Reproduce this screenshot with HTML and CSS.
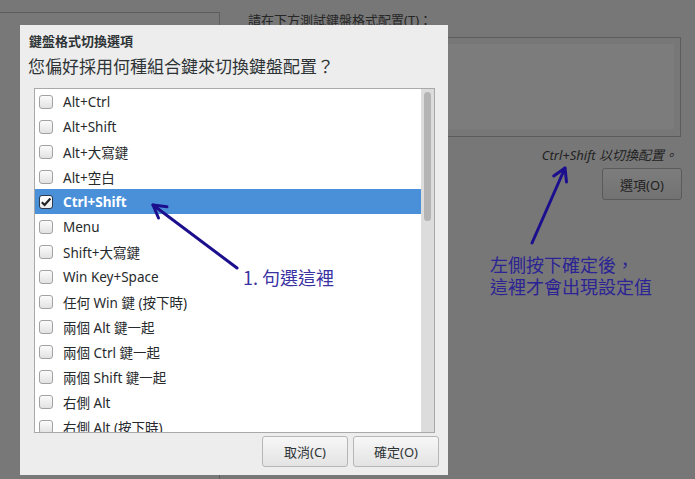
FILE: index.html
```html
<!DOCTYPE html>
<html lang="zh-Hant">
<head>
  <meta charset="UTF-8" />
  <title>鍵盤格式切換選項</title>
  <link rel="stylesheet" href="styles.css">
</head>
<body>
  <div class="window">
    <div class="sidebar"></div>
    <div class="pane">
      <div class="pane-label">請在下方測試鍵盤格式配置(T)：</div>
      <div class="test-box"><div class="test-inner"></div></div>
      <div class="hint">Ctrl+Shift 以切換配置。</div>
      <div class="pane-actions"><button class="btn btn-dim">選項(O)</button></div>
    </div>
  </div>

  <div class="dialog">
    <h1 class="dlg-title">鍵盤格式切換選項</h1>
    <h2 class="dlg-question">您偏好採用何種組合鍵來切換鍵盤配置？</h2>
    <div class="list">
      <div class="rows">
        <div class="item"><span class="box"></span>Alt+Ctrl</div>
        <div class="item"><span class="box"></span>Alt+Shift</div>
        <div class="item"><span class="box"></span>Alt+大寫鍵</div>
        <div class="item"><span class="box"></span>Alt+空白</div>
        <div class="item selected">
          <span class="box checked">
            <svg width="12" height="12" viewBox="0 0 12 12"><path d="M1.8 6.2 L4.6 9 L10.4 2.4" fill="none" stroke="#222" stroke-width="2.2"/></svg>
          </span>Ctrl+Shift
        </div>
        <div class="item"><span class="box"></span>Menu</div>
        <div class="item"><span class="box"></span>Shift+大寫鍵</div>
        <div class="item"><span class="box"></span>Win Key+Space</div>
        <div class="item"><span class="box"></span>任何 Win 鍵 (按下時)</div>
        <div class="item"><span class="box"></span>兩個 Alt 鍵一起</div>
        <div class="item"><span class="box"></span>兩個 Ctrl 鍵一起</div>
        <div class="item"><span class="box"></span>兩個 Shift 鍵一起</div>
        <div class="item"><span class="box"></span>右側 Alt</div>
        <div class="item"><span class="box"></span>右側 Alt (按下時)</div>
      </div>
      <div class="track"><div class="thumb"></div></div>
    </div>
    <div class="dlg-actions">
      <button class="btn">取消(C)</button>
      <button class="btn">確定(O)</button>
    </div>
  </div>

  <!-- hand-drawn pointers -->
  <svg class="marks" width="695" height="479" viewBox="0 0 695 479">
    <g fill="none" stroke="#1c0f8e" stroke-width="3" stroke-linecap="round" stroke-linejoin="round">
      <path d="M237 268 L153 205"/>
      <path d="M158.5 218 L153 205 L167 206.7"/>
      <path d="M532 243 L565 168"/>
      <path d="M553.7 176 L565 168 L566.5 182"/>
    </g>
  </svg>
  <div class="note note-left">1. 句選這裡</div>
  <div class="note note-right">
    <div>左側按下確定後，</div>
    <div>這裡才會出現設定值</div>
  </div>
</body>
</html>
```

FILE: styles.css
```css
body {
  margin: 0;
  width: 695px;
  height: 479px;
  overflow: hidden;
  position: relative;
  background: #777777;
  font-family: 'Noto Sans', 'Noto Sans CJK TC', sans-serif;
  color: #2e3436;
}
.window {
  display: flex;
  height: 479px;
}
.sidebar {
  width: 219px;
  margin-top: 12px;
  border-top: 1px solid #5e5e5e;
  border-right: 1px solid #5e5e5e;
  background: #787878;
}
.pane {
  flex: 1;
  padding: 12px 14px 0 28px;
}
.pane-label {
  font-size: 13px;
  line-height: 16px;
  color: #262626;
  margin-bottom: 9px;
}
.test-box {
  border: 1px solid #5c5c5c;
  padding: 6px 6px 7px 6px;
}
.test-inner {
  height: 85px;
  background: #7c7c7c;
}
.hint {
  margin-top: 9px;
  margin-right: 4px;
  text-align: right;
  font-size: 13px;
  line-height: 18px;
  font-style: italic;
  color: #222;
}
.pane-actions {
  display: flex;
  justify-content: flex-end;
  margin-top: 4px;
  margin-right: -1px;
}
.btn {
  width: 86px;
  height: 31px;
  border: 1px solid #b6b6b6;
  border-radius: 3px;
  background: linear-gradient(#f7f7f7, #e3e3e3);
  font-family: 'Noto Sans', 'Noto Sans CJK TC', sans-serif;
  font-size: 13px;
  color: #2e3436;
  padding: 0;
}
.btn-dim {
  width: 80px;
  height: 32px;
  border-color: #5a5a5a;
  background: linear-gradient(#7d7d7d, #727272);
  color: #1f1f1f;
}

/* the dialog on top */
.dialog {
  position: absolute;
  left: 20px;
  top: 25px;
  width: 428px;
  height: 450px;
  box-sizing: border-box;
  padding: 8px 9px 0 9px;
  background: #ededed;
}
.dlg-title {
  margin: 0;
  font-size: 13px;
  line-height: 17px;
  font-weight: bold;
}
.dlg-question {
  margin: 5px 0 0 -1px;
  font-size: 17px;
  line-height: 24px;
  font-weight: normal;
}
.list {
  display: flex;
  width: 401px;
  height: 345px;
  box-sizing: border-box;
  margin: 9px 0 0 5px;
  border: 1px solid #a9a9a9;
  background: #fff;
  overflow: hidden;
}
.rows {
  flex: 1;
  overflow: hidden;
}
.item {
  display: flex;
  align-items: center;
  gap: 10px;
  height: 25px;
  padding-left: 4px;
  font-size: 13.5px;
  color: #262a2c;
  white-space: nowrap;
}
.item.selected {
  background: #4a90d9;
  color: #fff;
  font-weight: bold;
}
.box {
  width: 14px;
  height: 14px;
  box-sizing: border-box;
  border: 1px solid #a2a2a2;
  border-radius: 3px;
  background: linear-gradient(#fbfbfb, #e2e2e2);
  display: flex;
  align-items: center;
  justify-content: center;
  flex-shrink: 0;
}
.box.checked {
  border-color: #2e3a4a;
  background: linear-gradient(#ffffff, #ececec);
}
.track {
  width: 13px;
  background: #dcdcdc;
  padding: 3px 0 0 3px;
  box-sizing: border-box;
}
.thumb {
  width: 7px;
  height: 129px;
  border-radius: 4px;
  background: #b4b4b4;
}
.dlg-actions {
  display: flex;
  justify-content: flex-end;
  gap: 5px;
  margin-top: 3px;
}

/* annotations */
.marks {
  position: absolute;
  left: 0;
  top: 0;
  pointer-events: none;
}
.note {
  position: absolute;
  font-family: 'Noto Sans CJK TC', sans-serif;
  font-size: 18px;
  line-height: 22px;
  white-space: nowrap;
}
.note-left {
  left: 243px;
  top: 266px;
  color: #3a32a3;
}
.note-right {
  left: 490px;
  top: 253px;
  color: #2c2494;
}
```
